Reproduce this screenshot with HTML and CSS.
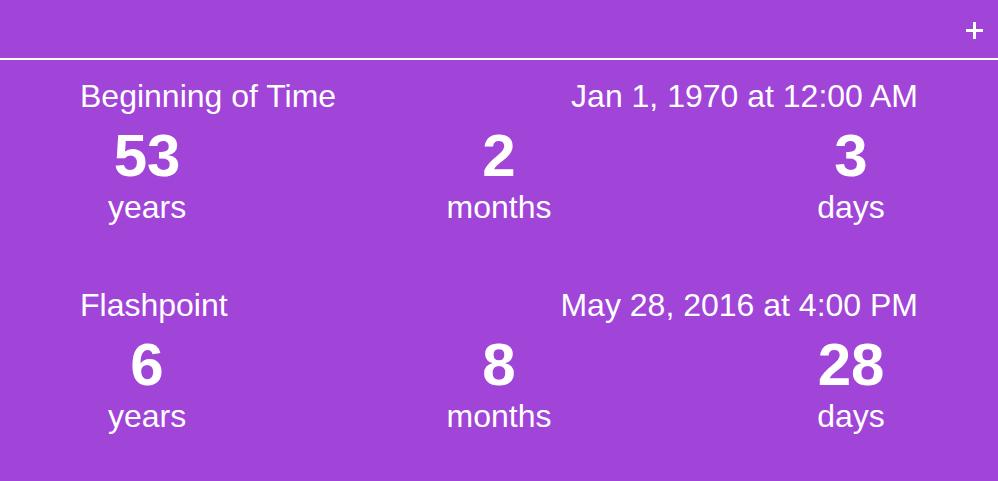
FILE: index.html
```html
<!DOCTYPE html>
<html>
<head>
<meta charset="utf-8">
<link rel="stylesheet" href="styles.css">
</head>
<body>
<header class="topbar">
  <svg class="add" width="17" height="17" viewBox="0 0 17 17"><path d="M8.5 0V17M0 8.5H17" stroke="#fff" stroke-width="3"/></svg>
</header>
<main class="list">
  <section class="item">
    <div class="head"><span>Beginning of Time</span><span>Jan 1, 1970 at 12:00 AM</span></div>
    <div class="stats">
      <div class="stat"><div class="num">53</div><div class="unit">years</div></div>
      <div class="stat"><div class="num">2</div><div class="unit">months</div></div>
      <div class="stat"><div class="num">3</div><div class="unit">days</div></div>
    </div>
  </section>
  <section class="item">
    <div class="head"><span>Flashpoint</span><span>May 28, 2016 at 4:00 PM</span></div>
    <div class="stats">
      <div class="stat"><div class="num">6</div><div class="unit">years</div></div>
      <div class="stat"><div class="num">8</div><div class="unit">months</div></div>
      <div class="stat"><div class="num">28</div><div class="unit">days</div></div>
    </div>
  </section>
</main>
</body>
</html>
```
FILE: styles.css
```css
html, body {
  margin: 0;
  padding: 0;
  background: #a144d8;
  color: #fff;
  font-family: "Liberation Sans", Arial, sans-serif;
}
.topbar {
  height: 58px;
  border-bottom: 2px solid #fff;
  display: flex;
  justify-content: flex-end;
  align-items: center;
  padding-right: 15px;
  box-sizing: content-box;
}
.add {
  display: block;
  margin-top: 3px;
}
.list {
  padding: 18px 80px 0;
  display: flex;
  flex-direction: column;
  gap: 62px;
}
.head {
  display: flex;
  justify-content: space-between;
  font-size: 32px;
  line-height: 36px;
}
.stats {
  display: flex;
  justify-content: space-between;
  margin-top: 12px;
}
.stat {
  width: 134px;
  display: flex;
  flex-direction: column;
  align-items: center;
}
.num {
  font-size: 60px;
  font-weight: bold;
  line-height: 60px;
}
.unit {
  font-size: 32px;
  line-height: 36px;
  margin-top: 3px;
}
```
